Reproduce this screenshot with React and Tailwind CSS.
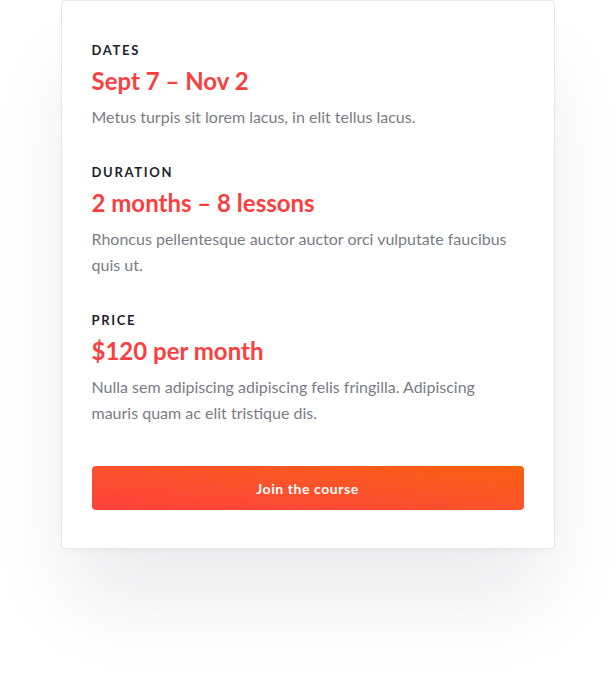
export default function App() {
  const sections = [
    {
      label: "DATES",
      title: "Sept 7 – Nov 2",
      text: "Metus turpis sit lorem lacus, in elit tellus lacus.",
    },
    {
      label: "DURATION",
      title: "2 months – 8 lessons",
      text: "Rhoncus pellentesque auctor auctor orci vulputate faucibus quis ut.",
    },
    {
      label: "PRICE",
      title: "$120 per month",
      text: "Nulla sem adipiscing adipiscing felis fringilla. Adipiscing mauris quam ac elit tristique dis.",
    },
  ];
  return (
    <div
      className="w-[615px] h-[690px] bg-white overflow-hidden"
      style={{ fontFamily: "Lato, 'Noto Sans', sans-serif" }}
    >
      <div className="mx-auto w-[494px] bg-white border border-[#e6e7ea] rounded-[4px] px-[30px] pt-[41px] pb-[38px] shadow-[0_2px_4px_rgba(20,20,40,0.03),0_60px_80px_-10px_rgba(30,30,60,0.09)]">
        <div className="flex flex-col gap-[34px]">
          {sections.map((s) => (
            <div key={s.label} className="flex flex-col">
              <div className="text-[13px] leading-[16px] font-bold tracking-[0.13em] text-[#1d1f2c]">
                {s.label}
              </div>
              <div className="mt-[9px] text-[24px] leading-[28px] font-bold text-[#fa3f3f]">
                {s.title}
              </div>
              <p className="mt-[9px] text-[16px] leading-[26px] text-[#7a7c85]">
                {s.text}
              </p>
            </div>
          ))}
        </div>
        <button className="mt-[40px] w-full h-[44px] rounded-[4px] bg-linear-to-tr from-[#ff403c] to-[#f7600a] text-white text-[14px] font-bold tracking-[0.04em]">
          Join the course
        </button>
      </div>
    </div>
  );
}
